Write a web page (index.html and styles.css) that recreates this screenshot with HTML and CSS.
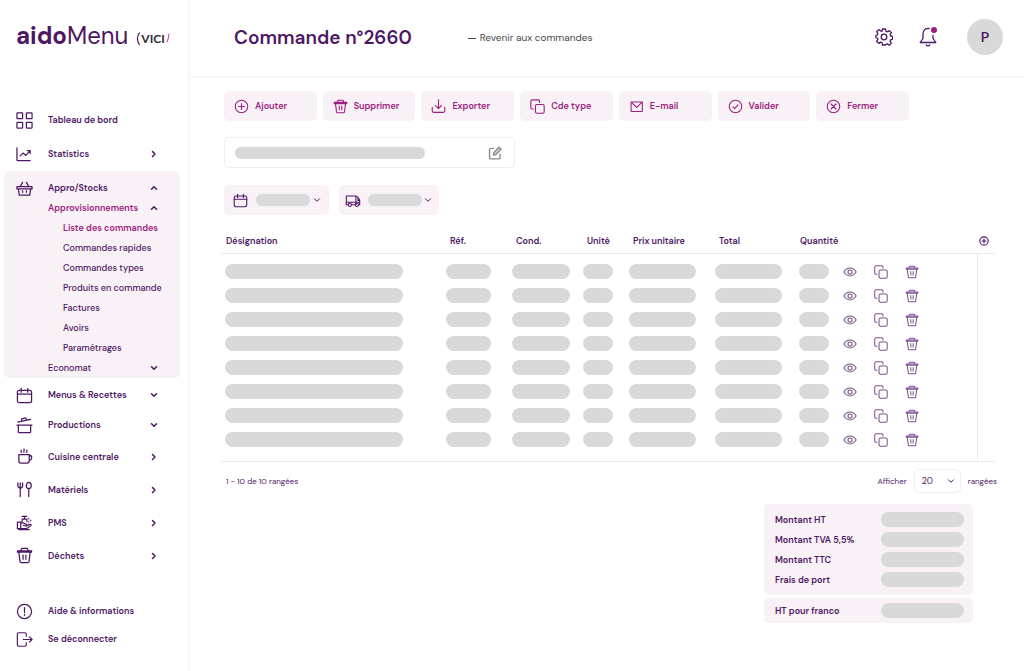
FILE: index.html
```html
<!DOCTYPE html>
<html lang="fr">
<head>
<meta charset="utf-8">
<meta name="viewport" content="width=device-width, initial-scale=1">
<title>aidoMenu – Commande n°2660</title>
<link rel="stylesheet" href="styles.css">
</head>
<body>
<svg class="sprite" aria-hidden="true">
  <symbol id="i-grid" viewBox="0 0 18 18"><rect x="1" y="1" width="6" height="6" rx=".5"/><rect x="11" y="1" width="6" height="6" rx=".5"/><rect x="1" y="11" width="6" height="6" rx=".5"/><rect x="11" y="11" width="6" height="6" rx=".5"/></symbol>
  <symbol id="i-chart" viewBox="0 0 18 18"><path d="M1 2v12.500a1 1 0 0 0 1 1h13M4.500 10.500l3-3 3 2.500 4-4.500M12 5h3v3"/></symbol>
  <symbol id="i-basket" viewBox="0 0 18 18"><path d="M1 7h16v2.500H1zM2.500 9.500l1 6.500h11l1-6.500M4.500 7 7 2.500M13.500 7 11 2.500M7 11.500v1.500M11 11.500v1.500"/></symbol>
  <symbol id="i-calendar" viewBox="0 0 18 18"><rect x="1.500" y="3.500" width="15" height="13" rx="2"/><path d="M1.500 7.500h15M5.500 1.500v4M12.500 1.500v4"/></symbol>
  <symbol id="i-pot" viewBox="0 0 18 18"><path d="M1 8.500h16M2.500 8.500v7c0 .6.400 1 1 1h11c.6 0 1-.4 1-1v-7M2 5.500l13.500-3M6.500 4.500l-.7-2.500 4.500-1 1 2.400"/></symbol>
  <symbol id="i-cup" viewBox="0 0 18 18"><path d="M3 7h11v6.500a2.500 2.500 0 0 1-2.500 2.500h-6A2.500 2.500 0 0 1 3 13.500zM14 7.500l2.500 1v3L14 13.500M5.500 4.500c-.8-.8.6-1.400 0-2.300M8.500 4.500c-1-1 .8-2 0-3.500M11.500 4.500c-.8-.8.6-1.400 0-2.300"/></symbol>
  <symbol id="i-cutlery" viewBox="0 0 18 18"><path d="M2 2v3a2.500 2.500 0 0 0 5 0V2M4.500 2v14.500M13.500 8v8.500"/><ellipse cx="13.500" cy="4.800" rx="2.600" ry="3.300"/></symbol>
  <symbol id="i-wash" viewBox="0 0 18 18"><path d="M1.500 8.500h3.500v7H1.500zM5 9.500h3l3 1.500c1.500.7.500 2-.6 1.700L8 12M11 12.500l3.500-1.500c1.500-.4 2 .8 1 1.500L11 15.500H5M3 15.500v1h11M6.500 8V5.500h5V8M9 5.500V2.500M6.500 2.500h5M13.500 4.500v.6M15.500 6.500v.6M13.500 8v.6"/></symbol>
  <symbol id="i-trash" viewBox="0 0 18 18"><path d="M1.500 4h15v1.500h-15zM5 4l1-2.500h6L13 4M3 5.500l1.200 10a1.200 1.200 0 0 0 1.200 1h7.200a1.200 1.200 0 0 0 1.200-1L15 5.500M7.500 8.500V13M10.500 8.500V13"/></symbol>
  <symbol id="i-info" viewBox="0 0 18 18"><circle cx="9" cy="9" r="7.500"/><path d="M9 5v5M9 12v1"/></symbol>
  <symbol id="i-logout" viewBox="0 0 19 18"><path d="M11.500 5.500V3a1.500 1.500 0 0 0-1.500-1.500H3A1.500 1.500 0 0 0 1.500 3v12A1.500 1.500 0 0 0 3 16.500h7a1.500 1.500 0 0 0 1.500-1.500v-2.500M8 9h10M15 6l3 3-3 3"/></symbol>
  <symbol id="i-right" viewBox="0 0 10 10"><path d="M3.500 2.500 6 5 3.500 7.500"/></symbol>
  <symbol id="i-up" viewBox="0 0 10 10"><path d="M2.500 6.200 5 3.700l2.500 2.500"/></symbol>
  <symbol id="i-down" viewBox="0 0 10 10"><path d="M2.500 3.800 5 6.300l2.500-2.500"/></symbol>
  <symbol id="i-gear" viewBox="0 0 18 18"><circle cx="9" cy="9" r="2.800"/><path d="M7.500 1h3l.5 2.300 1.300.6 2-1.300 2.100 2.100-1.300 2 .6 1.300 1.900.4v2.800l-2 .6-.5 1.300 1.200 2-2 2.100-2-1.300-1.300.5L10.500 17h-3l-.5-2.300-1.300-.6-2 1.300-2.100-2.100 1.300-2-.6-1.300L.9 9.600V7.400l1.400-.4.600-1.300-1.300-2 2.100-2.100 2 1.300L7 3.300z"/></symbol>
  <symbol id="i-bell" viewBox="0 0 18 20"><path d="M10 1.500H9C5.800 1.500 4 4 4 7v4.500L1.200 15.500h15.600L14 11.500V8.500M7.200 18c1 1 2.600 1 3.600 0"/></symbol>
  <symbol id="i-plus" viewBox="0 0 18 18"><circle cx="9" cy="9" r="7.500"/><path d="M9 5.500v7M5.500 9h7"/></symbol>
  <symbol id="i-check" viewBox="0 0 18 18"><circle cx="9" cy="9" r="7.500"/><path d="M6 9.500l2 2 4-4.500"/></symbol>
  <symbol id="i-cross" viewBox="0 0 18 18"><circle cx="9" cy="9" r="7.500"/><path d="M6 6l6 6M12 6l-6 6"/></symbol>
  <symbol id="i-export" viewBox="0 0 18 18"><path d="M9 1v10.500M5.500 8 9 11.500 12.500 8M1.500 10v4.500A1.500 1.500 0 0 0 3 16h12a1.500 1.500 0 0 0 1.500-1.500V10"/></symbol>
  <symbol id="i-copy" viewBox="0 0 18 18"><rect x="6.500" y="6.500" width="10.500" height="10.500" rx="1.800"/><path d="M11.500 4V2.500A1.500 1.500 0 0 0 10 1H2.500A1.500 1.500 0 0 0 1 2.500v8A1.500 1.500 0 0 0 2.500 12H4"/></symbol>
  <symbol id="i-mail" viewBox="0 0 18 18"><rect x="2.500" y="3.500" width="13.500" height="11.500" rx=".5"/><path d="M3 4l6.200 6L15.500 4"/></symbol>
  <symbol id="i-edit" viewBox="0 0 18 18"><path d="M7.500 3H3.500A1.500 1.500 0 0 0 2 4.500v10.500a1.500 1.500 0 0 0 1.500 1.500H14a1.500 1.500 0 0 0 1.500-1.500v-4"/><path class="fill" d="M7 11.500l.6-3.200L14 1.500l2.800 2.800-6.600 6.600z"/></symbol>
  <symbol id="i-truck" viewBox="0 0 18 18"><path d="M3 14H1V3.500h11.500V14H7.500M12.500 4.500h2l2.500 4V14h-1M1 11h16M15 5v4h2"/><circle cx="5.200" cy="14.200" r="1.900"/><circle cx="13.700" cy="14.200" r="1.900"/></symbol>
  <symbol id="i-eye" viewBox="0 0 18 18"><path d="M1 9C3 6 5.800 4 9 4s6 2 8 5c-2 3-4.800 5-8 5S3 12 1 9z"/><circle cx="9" cy="9" r="2.700"/></symbol>
</svg>

<div class="app">
  <aside class="sidebar">
    <div class="brand">
      <span class="brand-name"><b>aido</b>Menu</span>
      <span class="vici">
        <svg class="arc" viewBox="0 0 4 16"><path d="M3.500 1C.8 5 .8 10 3.500 14.500"/></svg>
        <span class="vici-name">VICI</span>
        <svg class="arc pink" viewBox="0 0 4 16"><path d="M3 2C3 6 2.500 8 1 11"/></svg>
      </span>
    </div>
    <nav aria-label="Menu principal">
      <ul class="menu">
        <li><a class="item tall" href="#"><svg class="icon"><use href="#i-grid"/></svg><span>Tableau de bord</span></a></li>
        <li><button class="item tall"><svg class="icon"><use href="#i-chart"/></svg><span>Statistics</span><svg class="chev"><use href="#i-right"/></svg></button></li>
        <li class="group">
          <button class="item sub" aria-expanded="true"><svg class="icon"><use href="#i-basket"/></svg><span>Appro/Stocks</span><svg class="chev"><use href="#i-up"/></svg></button>
          <button class="item sub nested active" aria-expanded="true"><span>Approvisionnements</span><svg class="chev"><use href="#i-up"/></svg></button>
          <ul class="leafs">
            <li><a class="leaf active" href="#" aria-current="page">Liste des commandes</a></li>
            <li><a class="leaf" href="#">Commandes rapides</a></li>
            <li><a class="leaf" href="#">Commandes types</a></li>
            <li><a class="leaf" href="#">Produits en commande</a></li>
            <li><a class="leaf" href="#">Factures</a></li>
            <li><a class="leaf" href="#">Avoirs</a></li>
            <li><a class="leaf" href="#">Paramétrages</a></li>
          </ul>
          <button class="item sub nested light"><span>Economat</span><svg class="chev"><use href="#i-down"/></svg></button>
        </li>
        <li><button class="item short"><svg class="icon"><use href="#i-calendar"/></svg><span>Menus &amp; Recettes</span><svg class="chev"><use href="#i-down"/></svg></button></li>
        <li><button class="item short"><svg class="icon"><use href="#i-pot"/></svg><span>Productions</span><svg class="chev"><use href="#i-down"/></svg></button></li>
        <li><button class="item"><svg class="icon"><use href="#i-cup"/></svg><span>Cuisine centrale</span><svg class="chev"><use href="#i-right"/></svg></button></li>
        <li><button class="item"><svg class="icon"><use href="#i-cutlery"/></svg><span>Matériels</span><svg class="chev"><use href="#i-right"/></svg></button></li>
        <li><button class="item"><svg class="icon"><use href="#i-wash"/></svg><span>PMS</span><svg class="chev"><use href="#i-right"/></svg></button></li>
        <li><button class="item"><svg class="icon"><use href="#i-trash"/></svg><span>Déchets</span><svg class="chev"><use href="#i-right"/></svg></button></li>
      </ul>
      <ul class="menu secondary">
        <li><a class="item" href="#"><svg class="icon"><use href="#i-info"/></svg><span>Aide &amp; informations</span></a></li>
        <li><a class="item" href="#"><svg class="icon"><use href="#i-logout"/></svg><span>Se déconnecter</span></a></li>
      </ul>
    </nav>
  </aside>

  <div class="page">
    <header class="topbar">
      <h1>Commande n°2660</h1>
      <a class="back" href="#"><span class="dash"></span>Revenir aux commandes</a>
      <div class="tools">
        <button class="tool" aria-label="Paramètres"><svg class="gear"><use href="#i-gear"/></svg></button>
        <button class="tool" aria-label="Notifications"><svg class="bell"><use href="#i-bell"/></svg><span class="dot"></span></button>
        <button class="avatar">P</button>
      </div>
    </header>

    <main class="content">
      <div class="actions">
        <button class="action"><svg><use href="#i-plus"/></svg>Ajouter</button>
        <button class="action"><svg><use href="#i-trash"/></svg>Supprimer</button>
        <button class="action"><svg><use href="#i-export"/></svg>Exporter</button>
        <button class="action"><svg><use href="#i-copy"/></svg>Cde type</button>
        <button class="action"><svg><use href="#i-mail"/></svg>E-mail</button>
        <button class="action"><svg><use href="#i-check"/></svg>Valider</button>
        <button class="action"><svg><use href="#i-cross"/></svg>Fermer</button>
      </div>

      <div class="field">
        <span class="bar w-title"></span>
        <button class="edit" aria-label="Modifier"><svg><use href="#i-edit"/></svg></button>
      </div>

      <div class="filters">
        <button class="filter" aria-label="Date"><svg><use href="#i-calendar"/></svg><span class="bar w-filter"></span><svg class="chev"><use href="#i-down"/></svg></button>
        <button class="filter compact" aria-label="Livraison"><svg><use href="#i-truck"/></svg><span class="bar w-filter"></span><svg class="chev"><use href="#i-down"/></svg></button>
      </div>

      <table class="lines">
        <colgroup><col><col class="c-ref"><col class="c-cond"><col class="c-unit"><col class="c-price"><col class="c-total"><col class="c-qty"><col class="c-act"><col class="c-add"></colgroup>
        <thead>
          <tr><th>Désignation</th><th>Réf.</th><th>Cond.</th><th>Unité</th><th>Prix unitaire</th><th>Total</th><th>Quantité</th><td></td><td><button class="add" aria-label="Ajouter une colonne"><svg><use href="#i-plus"/></svg></button></td></tr>
        </thead>
        <tbody id="rows"></tbody>
      </table>

      <div class="pager">
        <span>1 - 10 de 10 rangées</span>
        <div class="per-page">
          <label for="size">Afficher</label>
          <span class="select"><select id="size"><option>20</option><option>50</option></select><svg class="chev"><use href="#i-down"/></svg></span>
          <span>rangées</span>
        </div>
      </div>

      <div class="summary">
        <dl class="totals">
          <div><dt>Montant HT</dt><dd class="bar"></dd></div>
          <div><dt>Montant TVA 5,5%</dt><dd class="bar"></dd></div>
          <div><dt>Montant TTC</dt><dd class="bar"></dd></div>
          <div><dt>Frais de port</dt><dd class="bar"></dd></div>
        </dl>
        <dl class="totals franco">
          <div><dt>HT pour franco</dt><dd class="bar"></dd></div>
        </dl>
      </div>
    </main>
  </div>
</div>
<script src="rows.js"></script>
</body>
</html>
```

FILE: rows.js
```js
const widths = ["w-name", "w-ref", "w-cond", "w-small", "w-price", "w-price", "w-small"];
const actions = [["eye", "Voir"], ["copy", "Dupliquer"], ["trash", "Supprimer"]];
const cells = widths.map(w => `<td><span class="bar ${w}"></span></td>`).join("");
const buttons = actions
  .map(([icon, label]) => `<button class="row-btn" aria-label="${label}"><svg><use href="#i-${icon}"/></svg></button>`)
  .join("");
const row = `<tr>${cells}<td><div class="row-actions">${buttons}</div></td><td class="edge"></td></tr>`;
document.getElementById("rows").innerHTML = row.repeat(8);
```

FILE: styles.css
```css
:root {
  --ink: #4d1764;
  --accent: #9d1c80;
  --tint: #f8f1f6;
  --grey: #d9d9d9;
  --line: #ececec;
}

* { box-sizing: border-box; }

body {
  margin: 0;
  background: #fff;
  color: var(--ink);
  font: 9px/12px "DM Sans", Inter, "Liberation Sans", sans-serif;
}

ul, dl, dd, h1 { margin: 0; padding: 0; }
ul { list-style: none; }
a { color: inherit; text-decoration: none; }
button {
  margin: 0;
  padding: 0;
  border: 0;
  background: none;
  color: inherit;
  font: inherit;
  text-align: left;
  cursor: pointer;
}

svg {
  display: block;
  flex: none;
  fill: none;
  stroke: currentColor;
  stroke-width: 1.3;
  stroke-linecap: round;
  stroke-linejoin: round;
}
.sprite { position: absolute; width: 0; height: 0; }
.fill { fill: currentColor; fill-opacity: .4; }
.icon { width: 17px; height: 17px; }
.chev { width: 10px; height: 10px; stroke-width: 1.5; }

.app { display: flex; min-height: 100vh; }

/* Sidebar */
.sidebar {
  flex: none;
  width: 190px;
  padding: 20px 8px 0 4px;
  border-right: 2px solid #f6f6f6;
}
.brand {
  display: flex;
  align-items: center;
  gap: 8px;
  height: 32px;
  margin-bottom: 51px;
  padding-left: 12px;
}
.brand-name { font-size: 24px; line-height: 32px; }
.vici {
  display: flex;
  align-items: center;
  gap: 1px;
  padding-top: 6px;
}
.vici-name { color: #2b2b33; font: bold 12px/16px Lato, sans-serif; }
.arc { width: 4px; height: 14px; }
.pink { color: #d455a8; }

.item {
  display: flex;
  align-items: center;
  gap: 15px;
  width: 100%;
  height: 33px;
  padding: 0 21px 0 12px;
  font-weight: 600;
}
.item .chev { margin-left: auto; }
.tall { height: 34px; }
.short { height: 30px; }
.sub { height: 20px; }
.light { font-weight: 500; }
.nested { gap: 0; padding-left: 44px; }
.group {
  margin-bottom: 2px;
  padding-top: 7px;
  border-radius: 6px;
  background: var(--tint);
}
.leaf {
  display: block;
  padding: 4px 0 4px 59px;
  font-weight: 500;
  white-space: nowrap;
}
.item.active > span, .leaf.active { color: var(--accent); font-weight: 600; }
.secondary { margin-top: 25px; }
.secondary .item { height: 28px; }

/* Header */
.page { flex: 1; min-width: 0; }
.topbar {
  display: flex;
  align-items: center;
  height: 78px;
  padding: 0 21px 2px 44px;
  border-bottom: 2px solid #f6f6f6;
}
h1 {
  padding-top: 2px;
  font-size: 19px;
  line-height: 28px;
  font-weight: 600;
  white-space: nowrap;
}
.back {
  display: flex;
  align-items: center;
  gap: 4px;
  margin-left: 56px;
  padding-top: 2px;
  color: #4a4a4a;
  font-size: 10px;
  white-space: nowrap;
}
.dash { width: 8px; height: 1px; background: currentColor; }
.tools {
  display: flex;
  align-items: center;
  gap: 26px;
  margin-left: auto;
}
.tool { position: relative; }
.gear { width: 18px; height: 18px; }
.bell { width: 18px; height: 20px; }
.dot {
  position: absolute;
  top: 0;
  right: 0;
  width: 6px;
  height: 6px;
  border-radius: 50%;
  background: var(--accent);
}
.avatar {
  width: 36px;
  height: 36px;
  margin-left: 4px;
  border-radius: 50%;
  background: var(--grey);
  font-size: 14px;
  font-weight: 600;
  text-align: center;
}

/* Content */
.content { padding: 13px 27px 24px 31px; }
.actions {
  display: grid;
  grid-template-columns: repeat(7, 1fr);
  gap: 6px;
  max-width: 688px;
  padding-left: 3px;
}
.action {
  display: flex;
  align-items: center;
  gap: 6px;
  height: 30px;
  padding-left: 10px;
  border-radius: 5px;
  background: var(--tint);
  color: var(--accent);
  font-weight: 600;
}
.action svg { width: 15px; height: 15px; }

.bar {
  display: block;
  height: 15px;
  border-radius: 8px;
  background: var(--grey);
}
.w-title { width: 190px; height: 12px; }
.w-filter { width: 54px; height: 12px; }
.w-name { width: 178px; }
.w-ref { width: 45px; }
.w-cond { width: 58px; }
.w-small { width: 30px; }
.w-price { width: 67px; }

.field {
  display: flex;
  align-items: center;
  justify-content: space-between;
  width: 291px;
  height: 31px;
  margin: 16px 0 17px 3px;
  padding: 0 12px 0 10px;
  border: 1px solid #eee;
  border-radius: 5px;
}
.edit { color: #8c8c8c; }
.edit svg { width: 14px; height: 14px; stroke-width: 1.8; }

.filters { display: flex; gap: 10px; padding-left: 3px; }
.filter {
  display: flex;
  align-items: center;
  gap: 8px;
  height: 30px;
  padding: 0 7px 0 9px;
  border-radius: 5px;
  background: var(--tint);
}
.filter svg { width: 15px; height: 15px; }
.filter .chev { width: 10px; height: 10px; margin-left: -6px; stroke-width: 1; }
.compact { gap: 7px; padding: 0 6px; }
.compact svg { width: 16px; }

.lines {
  width: calc(100% - 2px);
  min-width: 774px;
  margin-top: 14px;
  table-layout: fixed;
  border-collapse: separate;
  border-spacing: 0;
  border-bottom: 1px solid var(--line);
}
.c-ref { width: 66px; }
.c-cond { width: 71px; }
.c-unit { width: 46px; }
.c-price { width: 86px; }
.c-total { width: 84px; }
.c-qty { width: 39px; }
.c-act { width: 143px; }
.c-add { width: 18px; }
.lines th, .lines thead td {
  height: 25px;
  padding: 0 0 0 8px;
  border-bottom: 1px solid var(--line);
  font-weight: 600;
  text-align: left;
  white-space: nowrap;
}
.lines th:first-child, .lines th:nth-child(7) { padding-left: 5px; }
.lines thead td:last-child { padding-left: 2px; }
.add { display: block; }
.add svg { width: 10px; height: 10px; stroke-width: 2; }
.lines tbody td { height: 24px; padding: 0 0 0 4px; }
.lines tbody tr:first-child td { height: 29px; padding-top: 5px; }
.lines tbody tr:last-child td { height: 34px; padding-bottom: 10px; }
.edge { border-left: 1px solid var(--line); }
.row-actions { display: flex; gap: 17px; padding: 2px 0 0 5px; }
.row-btn { opacity: .75; }
.row-btn svg { width: 14px; height: 14px; }

.pager {
  display: flex;
  align-items: center;
  justify-content: space-between;
  padding: 7px 0 11px 5px;
  font-size: 8px;
}
.per-page { display: flex; align-items: center; gap: 7px; }
.select { position: relative; }
.select select {
  display: block;
  width: 47px;
  height: 24px;
  padding: 0 7px;
  border: 1px solid #eee;
  border-radius: 5px;
  background: #fff;
  color: inherit;
  font: inherit;
  font-size: 9px;
  appearance: none;
}
.select .chev {
  position: absolute;
  top: 7px;
  right: 5px;
  stroke-width: 1;
  pointer-events: none;
}

.summary {
  display: grid;
  gap: 3px;
  width: 209px;
  margin: 0 24px 0 auto;
  font-weight: 600;
}
.totals {
  display: grid;
  gap: 5px;
  padding: 8px 9px 8px 11px;
  border-radius: 5px;
  background: var(--tint);
}
.franco { padding-block: 5px; }
.totals div { display: flex; align-items: center; justify-content: space-between; }
.totals dd { width: 83px; }
```
